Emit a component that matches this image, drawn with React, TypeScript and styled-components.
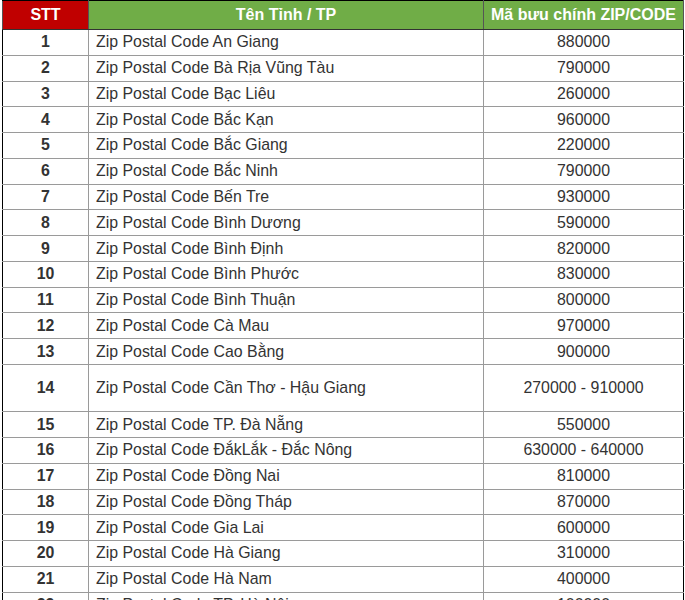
import React from "react";
import styled, { createGlobalStyle } from "styled-components";

const GlobalStyle = createGlobalStyle`
  html, body {
    margin: 0;
    padding: 0;
    background: #fff;
    overflow: hidden;
  }
  body {
    font-family: "Liberation Sans", Arial, sans-serif;
  }
`;

const Page = styled.div`
  padding: 0 3px 0 2px;
`;

const Table = styled.table`
  width: 681px;
  border-collapse: collapse;
  table-layout: fixed;
  border: 1px solid #000;
`;

const HeadCell = styled.th<{ $red?: boolean }>`
  height: 28px;
  padding: 0;
  background: ${(p) => (p.$red ? "#c00000" : "#70ad47")};
  color: #fff;
  font-size: 16px;
  font-weight: bold;
  text-align: center;
  border: 1px solid #555;
  border-top-color: #000;
  border-bottom: 1px solid #333;
`;

const Row = styled.tr<{ $tall?: boolean }>`
  height: ${(p) => (p.$tall ? "47.3px" : "25.78px")};
`;

const Cell = styled.td<{ $align?: "left" | "center"; $bold?: boolean }>`
  padding: 0 0 0 ${(p) => (p.$align === "left" ? "7px" : "0")};
  border: 1px solid #9a9a9a;
  text-align: ${(p) => p.$align ?? "center"};
  font-size: 15.9px;
  font-weight: ${(p) => (p.$bold ? "bold" : "normal")};
  color: #333;
  white-space: nowrap;
  vertical-align: middle;
`;

const NumCell = styled(Cell)`
  border-left: 1px solid #000;
`;

const CodeCell = styled(Cell)`
  border-right: 1px solid #000;
`;

type Entry = { no: number; name: string; code: string; tall?: boolean };

const rows: Entry[] = [
  { no: 1, name: "An Giang", code: "880000" },
  { no: 2, name: "Bà Rịa Vũng Tàu", code: "790000" },
  { no: 3, name: "Bạc Liêu", code: "260000" },
  { no: 4, name: "Bắc Kạn", code: "960000" },
  { no: 5, name: "Bắc Giang", code: "220000" },
  { no: 6, name: "Bắc Ninh", code: "790000" },
  { no: 7, name: "Bến Tre", code: "930000" },
  { no: 8, name: "Bình Dương", code: "590000" },
  { no: 9, name: "Bình Định", code: "820000" },
  { no: 10, name: "Bình Phước", code: "830000" },
  { no: 11, name: "Bình Thuận", code: "800000" },
  { no: 12, name: "Cà Mau", code: "970000" },
  { no: 13, name: "Cao Bằng", code: "900000" },
  { no: 14, name: "Cần Thơ - Hậu Giang", code: "270000 - 910000", tall: true },
  { no: 15, name: "TP. Đà Nẵng", code: "550000" },
  { no: 16, name: "ĐắkLắk - Đắc Nông", code: "630000 - 640000" },
  { no: 17, name: "Đồng Nai", code: "810000" },
  { no: 18, name: "Đồng Tháp", code: "870000" },
  { no: 19, name: "Gia Lai", code: "600000" },
  { no: 20, name: "Hà Giang", code: "310000" },
  { no: 21, name: "Hà Nam", code: "400000" },
  { no: 22, name: "TP. Hà Nội", code: "100000" },
];

export default function App() {
  return (
    <Page>
      <GlobalStyle />
      <Table>
        <colgroup>
          <col style={{ width: 86 }} />
          <col style={{ width: 395 }} />
          <col style={{ width: 200 }} />
        </colgroup>
        <thead>
          <tr>
            <HeadCell $red>STT</HeadCell>
            <HeadCell>Tên Tỉnh / TP</HeadCell>
            <HeadCell>Mã bưu chính ZIP/CODE</HeadCell>
          </tr>
        </thead>
        <tbody>
          {rows.map((r) => (
            <Row key={r.no} $tall={r.tall}>
              <NumCell $bold>{r.no}</NumCell>
              <Cell $align="left">Zip Postal Code {r.name}</Cell>
              <CodeCell>{r.code}</CodeCell>
            </Row>
          ))}
        </tbody>
      </Table>
    </Page>
  );
}
